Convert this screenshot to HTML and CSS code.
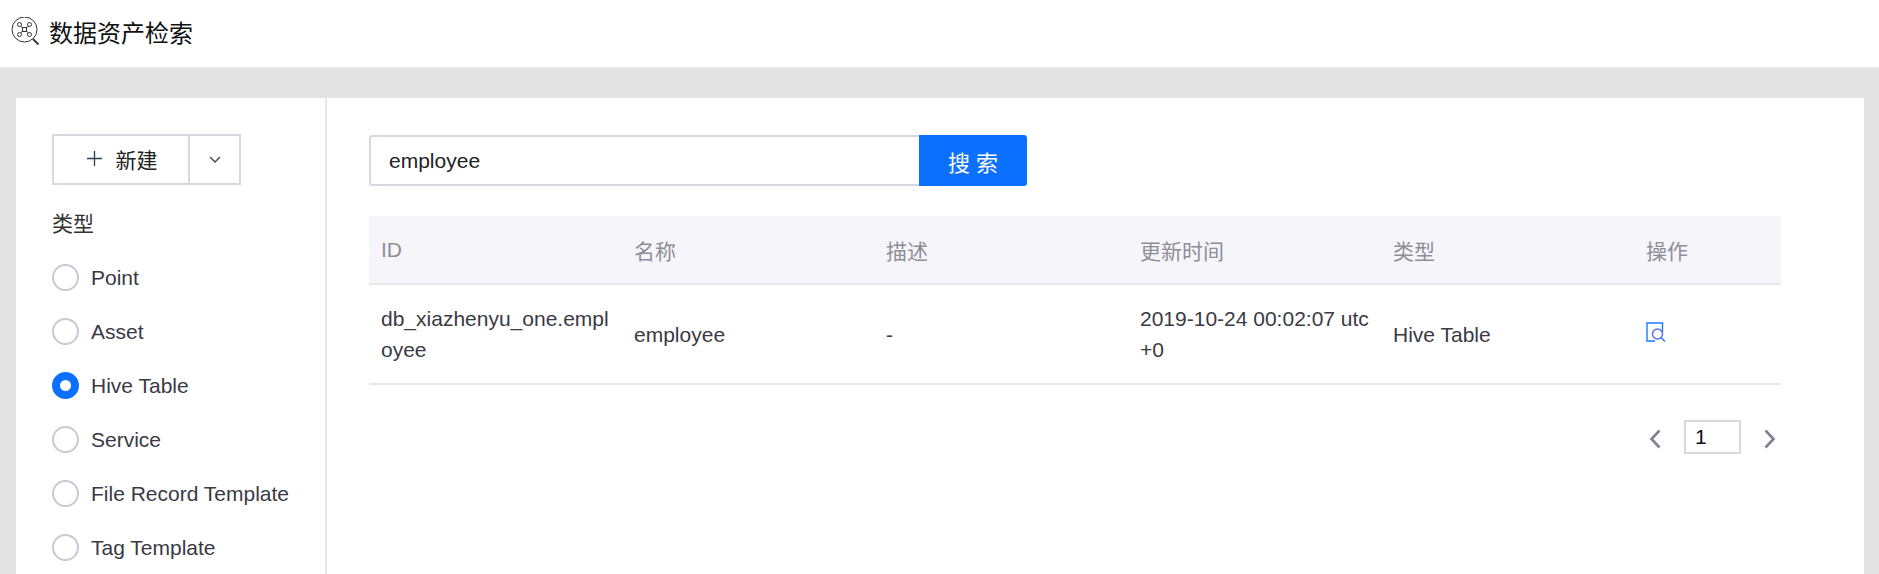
FILE: index.html
```html
<!DOCTYPE html>
<html lang="zh">
<head>
<meta charset="utf-8">
<title>数据资产检索</title>
<link rel="stylesheet" href="styles.css">
</head>
<body>
<header class="topbar">
  <svg class="logo" width="30" height="30" viewBox="0 0 30 30" fill="none" stroke="#333" stroke-width="1">
    <circle cx="14.500" cy="12.500" r="12.500"/>
    <path d="M23 22l5.500 5.500" stroke-width="1.800"/>
    <path d="M11 9.500l2 1.500M18 9.500l-2 1.500M11 15.500l2-1.500M18 15.500l-2-1.500M12.500 10.500h4v4h-4z"/>
    <circle cx="9.500" cy="7.500" r="2"/><circle cx="19.500" cy="7.500" r="2"/><circle cx="9.500" cy="17.500" r="2"/><circle cx="19.500" cy="17.500" r="2"/>
  </svg>
  <h1 class="title">数据资产检索</h1>
</header>
<main class="stage">
  <div class="card">
    <aside class="side">
      <div class="split">
        <button class="split-main">
          <svg class="plus" width="15" height="15" viewBox="0 0 15 15" stroke="#2c3e50" stroke-width="1.300"><path d="M7.500 0v15M0 7.500h15"/></svg>
          <span>新建</span>
        </button>
        <button class="split-more">
          <svg width="12" height="8" viewBox="0 0 12 8" fill="none" stroke="#4a5060" stroke-width="1.500"><path d="M1 1l5 5 5-5"/></svg>
        </button>
      </div>
      <div class="group-label">类型</div>
      <ul class="radios">
        <li class="radio"><i class="dot"></i>Point</li>
        <li class="radio"><i class="dot"></i>Asset</li>
        <li class="radio"><i class="dot on"></i>Hive Table</li>
        <li class="radio"><i class="dot"></i>Service</li>
        <li class="radio"><i class="dot"></i>File Record Template</li>
        <li class="radio"><i class="dot"></i>Tag Template</li>
      </ul>
    </aside>
    <section class="content">
      <div class="search">
        <div class="search-input">employee</div>
        <button class="search-btn">搜 索</button>
      </div>
      <table class="grid">
        <colgroup>
          <col class="c1"><col class="c2"><col class="c3"><col class="c4"><col class="c5"><col class="c6">
        </colgroup>
        <thead>
          <tr><th>ID</th><th>名称</th><th>描述</th><th>更新时间</th><th>类型</th><th>操作</th></tr>
        </thead>
        <tbody>
          <tr>
            <td>db_xiazhenyu_one.employee</td>
            <td>employee</td>
            <td>-</td>
            <td>2019-10-24 00:02:07 utc +0</td>
            <td>Hive Table</td>
            <td>
              <svg class="view" width="20" height="20" viewBox="0 0 20 20" fill="none" stroke="#1f7bff" stroke-width="1.400">
                <path d="M16.500 10V1H1v18h8"/>
                <circle cx="11.500" cy="12" r="5" stroke="#5b6ff0" stroke-width="1.500"/>
                <path d="M15 15.500l4 4"/>
              </svg>
            </td>
          </tr>
        </tbody>
      </table>
      <nav class="pager">
        <svg class="chev" width="12" height="20" viewBox="0 0 12 20" fill="none" stroke="#7b8290" stroke-width="2.600"><path d="M10.500 1.500L2.500 10l8 8.500"/></svg>
        <div class="page-box">1</div>
        <svg class="chev" width="12" height="20" viewBox="0 0 12 20" fill="none" stroke="#7b8290" stroke-width="2.600"><path d="M1.500 1.500L9.500 10l-8 8.500"/></svg>
      </nav>
    </section>
  </div>
</main>
</body>
</html>
```
FILE: styles.css
```css
* { box-sizing: border-box; }
html, body { margin: 0; height: 100%; overflow: hidden; }
body {
  font-family: "Liberation Sans", "Noto Sans CJK SC", sans-serif;
  font-size: 21px;
  color: #3a3a44;
  background: #e3e3e3;
  display: flex;
  flex-direction: column;
}
.topbar {
  height: 68px;
  flex: none;
  background: #fff;
  border-bottom: 1px solid #ececec;
  display: flex;
  align-items: center;
  padding: 0 0 4px 10px;
  gap: 9px;
}
.title { margin: 0; font-size: 24px; font-weight: 400; color: #111; }
.stage { flex: 1; padding: 30px 15px 0 16px; min-height: 0; }
.card { background: #fff; height: 100%; display: flex; }
.side {
  width: 311px;
  flex: none;
  border-right: 2px solid #e6e6ec;
  padding: 36px 0 0 36px;
}
.split { display: flex; width: 189px; height: 51px; }
.split button {
  background: #fff;
  border: 2px solid #d8d8e2;
  font: inherit;
  color: #222;
  padding: 0;
  display: flex;
  align-items: center;
  justify-content: center;
}
.split .split-main { width: 138px; gap: 14px; padding: 0 0 2px 2px; }
.split-more { width: 53px; margin-left: -2px; }
.group-label { margin-top: 23px; line-height: 31px; color: #333; }
.radios { list-style: none; margin: 11px 0 0; padding: 0; }
.radio { height: 54px; display: flex; align-items: center; gap: 12px; padding-top: 2px; }
.dot { width: 27px; height: 27px; margin-top: -2px; border-radius: 50%; border: 2px solid #c8c8d6; flex: none; background: #fff; }
.dot.on { border: 8px solid #0b70ff; }
.content { flex: 1; padding: 37px 0 0 42px; min-width: 0; }
.search { display: flex; width: 658px; height: 51px; }
.search-input {
  width: 550px;
  border: 2px solid #d8d8e2;
  border-right: 0;
  border-radius: 3px 0 0 3px;
  padding-left: 18px;
  line-height: 47px;
  color: #222;
}
.search-btn {
  width: 108px;
  border: 0;
  border-radius: 0 3px 3px 0;
  background: #0b70ff;
  color: #fff;
  font: inherit;
  font-size: 22px;
  padding: 0;
}
.grid { margin-top: 30px; width: 1412px; border-collapse: collapse; table-layout: fixed; }
.c1 { width: 253px; } .c2 { width: 252px; } .c3 { width: 254px; }
.c4 { width: 253px; } .c5 { width: 253px; } .c6 { width: 147px; }
.grid th {
  height: 68px;
  background: #f5f5fa;
  border-bottom: 2px solid #e6e6ec;
  text-align: left;
  font-weight: 400;
  color: #8e8e98;
  padding: 0 12px;
}
.grid td {
  height: 100px;
  border-bottom: 2px solid #e8e8ec;
  padding: 0 12px;
  line-height: 31px;
  word-break: break-all;
  color: #3a3a44;
}
.view { display: block; margin-top: -4px; }
.pager {
  width: 1412px;
  margin-top: 35px;
  display: flex;
  justify-content: flex-end;
  align-items: center;
  gap: 23px;
  padding-right: 5px;
}
.chev { margin-top: 3px; }
.page-box {
  width: 57px;
  height: 34px;
  border: 2px solid #d8d8e2;
  padding-left: 9px;
  line-height: 30px;
  color: #111;
}
```
